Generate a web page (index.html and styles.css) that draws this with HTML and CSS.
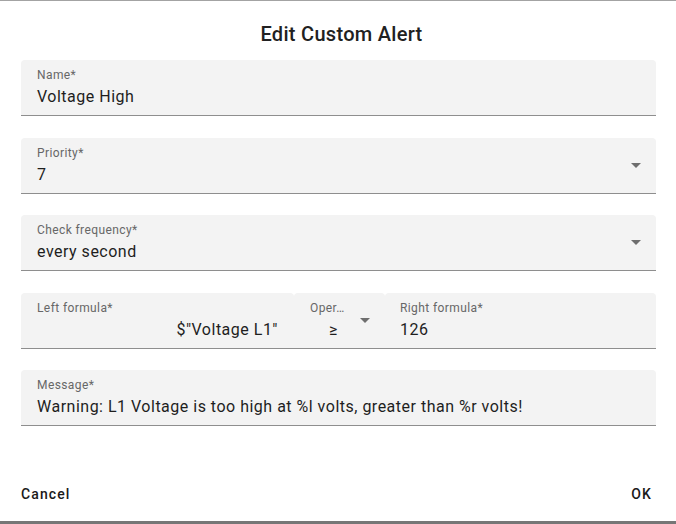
FILE: index.html
```html
<!DOCTYPE html>
<html>
<head>
<meta charset="utf-8">
<link rel="stylesheet" href="styles.css">
</head>
<body>
<div class="backdrop-top"></div>
<div class="dialog">
  <h2 class="title">Edit Custom Alert</h2>
  <div class="content">
    <div class="field">
      <div class="label">Name*</div>
      <div class="value">Voltage High</div>
    </div>
    <div class="field select">
      <div class="label">Priority*</div>
      <div class="value">7</div>
      <svg class="arrow" viewBox="0 0 10 5" width="10" height="5"><path d="M0 0l5 5 5-5z"/></svg>
    </div>
    <div class="field select">
      <div class="label">Check frequency*</div>
      <div class="value">every second</div>
      <svg class="arrow" viewBox="0 0 10 5" width="10" height="5"><path d="M0 0l5 5 5-5z"/></svg>
    </div>
    <div class="formula-row">
      <div class="field left">
        <div class="label">Left formula*</div>
        <div class="value right-align">$"Voltage L1"</div>
      </div>
      <div class="field op select">
        <div class="label">Oper…</div>
        <div class="value op-value">≥</div>
        <svg class="arrow" viewBox="0 0 10 5" width="10" height="5"><path d="M0 0l5 5 5-5z"/></svg>
      </div>
      <div class="field right">
        <div class="label">Right formula*</div>
        <div class="value">126</div>
      </div>
    </div>
    <div class="field">
      <div class="label">Message*</div>
      <div class="value">Warning: L1 Voltage is too high at %l volts, greater than %r volts!</div>
    </div>
  </div>
  <div class="actions">
    <span class="btn">Cancel</span>
    <span class="btn">OK</span>
  </div>
</div>
</body>
</html>
```

FILE: styles.css
```css
html, body {
  margin: 0;
  padding: 0;
}
body {
  width: 676px;
  height: 524px;
  background: #767676;
  font-family: Roboto, "Liberation Sans", sans-serif;
  overflow: hidden;
}
.backdrop-top {
  height: 1px;
  background: #a3a3a3;
}
.dialog {
  height: 520px;
  background: #ffffff;
  display: flex;
  flex-direction: column;
  box-sizing: border-box;
}
.title {
  margin: 0;
  padding: 17px 0 10px 7px;
  font-size: 20px;
  font-weight: 500;
  line-height: 32px;
  letter-spacing: 0.3px;
  text-align: center;
  color: #212121;
}
.content {
  padding: 0 20px 0 21px;
  display: flex;
  flex-direction: column;
  gap: 21px;
}
.content > :nth-child(2),
.content > :nth-child(4) {
  margin-top: 1px;
}
.field {
  position: relative;
  height: 56px;
  box-sizing: border-box;
  background: #f3f3f3;
  border-radius: 4px 4px 0 0;
  border-bottom: 1px solid #8e8e8e;
  padding: 0 16px;
}
.label {
  padding-top: 8px;
  font-size: 12px;
  line-height: 15px;
  color: #676767;
  letter-spacing: 0.4px;
  white-space: nowrap;
}
.value {
  margin-top: 2px;
  font-size: 16px;
  line-height: 23px;
  color: #1e1e1e;
  letter-spacing: 0.5px;
  white-space: nowrap;
}
.arrow {
  position: absolute;
  right: 15px;
  top: 25px;
  fill: #6e6e6e;
}
.formula-row {
  display: flex;
}
.formula-row .field {
  flex: none;
}
.formula-row .left {
  width: 273px;
}
.formula-row .op {
  width: 91px;
}
.formula-row .right {
  width: 271px;
  padding-left: 15px;
}
.right-align {
  text-align: right;
}
.op-value {
  padding-left: 19px;
}
.actions {
  margin-top: auto;
  display: flex;
  justify-content: space-between;
  padding: 0 24px 19px 21px;
}
.btn {
  font-size: 14px;
  font-weight: 500;
  line-height: 16px;
  letter-spacing: 1.1px;
  color: #1a1a1a;
}
```
